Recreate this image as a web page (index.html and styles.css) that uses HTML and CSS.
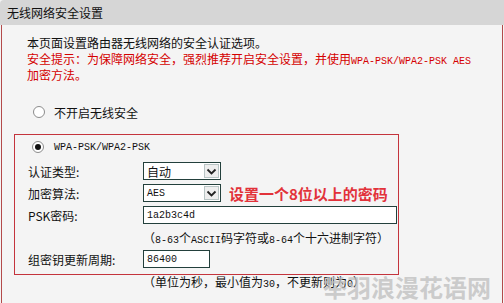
FILE: index.html
```html
<!DOCTYPE html>
<html lang="zh-CN">
<head>
<meta charset="utf-8">
<link rel="stylesheet" href="styles.css">
</head>
<body>
<div class="panel">
  <div class="hdr">无线网络安全设置</div>
  <div class="body">
    <p class="line">本页面设置路由器无线网络的安全认证选项。</p>
    <p class="line red">安全提示：为保障网络安全，强烈推荐开启安全设置，并使用<span class="a">WPA-PSK/WPA2-PSK AES</span></p>
    <p class="line red">加密方法。</p>
    <div class="opt"><span class="radio"></span><span>不开启无线安全</span></div>
    <div class="box">
      <div class="row first"><span class="radio on"></span><span class="a">WPA-PSK/WPA2-PSK</span></div>
      <div class="row"><span class="lbl">认证类型:</span>
        <div class="sel w1"><span class="val">自动</span><span class="btn"><svg width="11" height="7" viewBox="0 0 11 7"><polyline points="1.5,1.5 5.5,5.5 9.5,1.5" fill="none" stroke="#222" stroke-width="1.8"/></svg></span></div>
      </div>
      <div class="row"><span class="lbl">加密算法:</span>
        <div class="sel w1"><span class="val a">AES</span><span class="btn"><svg width="11" height="7" viewBox="0 0 11 7"><polyline points="1.5,1.5 5.5,5.5 9.5,1.5" fill="none" stroke="#222" stroke-width="1.8"/></svg></span></div>
        <span class="tip">设置一个8位以上的密码</span>
      </div>
      <div class="row"><span class="lbl">PSK密码:</span>
        <div class="inp w2"><span class="a">1a2b3c4d</span></div>
      </div>
      <div class="row"><span class="lbl"></span><span class="hint">（<span class="a">8-63</span>个<span class="a">ASCII</span>码字符或<span class="a">8-64</span>个十六进制字符）</span></div>
      <div class="row"><span class="lbl">组密钥更新周期:</span>
        <div class="inp w3"><span class="a">86400</span></div>
      </div>
    </div>
    <div class="note">（单位为秒，最小值为<span class="a">30</span>，不更新则为<span class="a">0</span>）</div>
  </div>
  <div class="wm">举羽浪漫花语网</div>
</div>
</body>
</html>
```
FILE: styles.css
```css
html, body {
  margin: 0;
  padding: 0;
  background: #f4f4f4;
}
body {
  font-family: "Noto Sans CJK SC", "Noto Sans", sans-serif;
  font-size: 12px;
  color: #111;
}
.panel {
  position: relative;
  width: 504px;
  height: 303px;
  overflow: hidden;
}
.hdr {
  height: 25px;
  line-height: 25px;
  background: #d6d6d6;
  border-radius: 4px 0 0 0;
  padding-left: 7px;
  font-size: 12px;
  color: #111;
}
.body {
  margin-left: 1px;
  width: 502px;
  box-sizing: border-box;
  height: 278px;
  border-left: 1px solid #b34a4a;
  border-right: 1px solid #b34a4a;
  background: #f4f4f4;
  padding-top: 10px;
}
.line {
  margin: 0;
  padding-left: 25px;
  line-height: 16px;
  height: 16px;
  white-space: nowrap;
}
.red { color: #d40000; }
.a {
  font-family: "Liberation Mono", "DejaVu Sans Mono", monospace;
  font-size: 10px;
}
.opt {
  display: flex;
  align-items: center;
  height: 22px;
  margin-top: 18px;
  padding-left: 31px;
}
.radio {
  width: 12px;
  height: 12px;
  box-sizing: border-box;
  border: 1px solid #8c8c8c;
  border-radius: 50%;
  background: #fff;
  margin-right: 9px;
  display: flex;
  align-items: center;
  justify-content: center;
  flex: none;
}
.radio.on::after {
  content: "";
  width: 6px;
  height: 6px;
  border-radius: 50%;
  background: #111;
}
.box {
  margin-top: 11px;
  margin-left: 12px;
  width: 385px;
  height: 141px;
  box-sizing: border-box;
  border: 1px solid #c4343c;
  padding: 1px 0 0 13px;
}
.row {
  display: flex;
  align-items: center;
  height: 22px;
  white-space: nowrap;
}
.row.first {
  padding-left: 4px;
  margin-bottom: 2px;
}
.row.first .radio { margin-right: 10px; }
.lbl {
  width: 115px;
  flex: none;
}
.sel {
  display: flex;
  align-items: center;
  height: 18px;
  box-sizing: border-box;
  border: 1px solid #23403c;
  background: #fff;
  flex: none;
}
.w1 { width: 78px; }
.sel .val {
  flex: 1;
  padding-left: 3px;
}
.sel .btn {
  width: 15px;
  height: 14px;
  margin-right: 1px;
  box-sizing: border-box;
  border: 1px solid #b8c4c4;
  background: #eeeeee;
  display: flex;
  align-items: center;
  justify-content: center;
}
.tip {
  margin-left: 8px;
  font-size: 15px;
  font-weight: bold;
  color: #e2323a;
  flex: none;
  white-space: nowrap;
}
.inp {
  height: 18px;
  box-sizing: border-box;
  border: 1px solid #23403c;
  background: #fff;
  display: flex;
  align-items: center;
  padding-left: 3px;
  flex: none;
}
.w2 { width: 254px; }
.w3 { width: 67px; }
.hint { white-space: nowrap; }
.note {
  margin-top: -1px;
  padding-left: 141px;
  line-height: 16px;
  white-space: nowrap;
}
.wm {
  position: absolute;
  left: 323px;
  top: 273px;
  font-size: 24px;
  line-height: 28px;
  color: rgba(190, 190, 190, 0.75);
  font-weight: bold;
  white-space: nowrap;
}
```
